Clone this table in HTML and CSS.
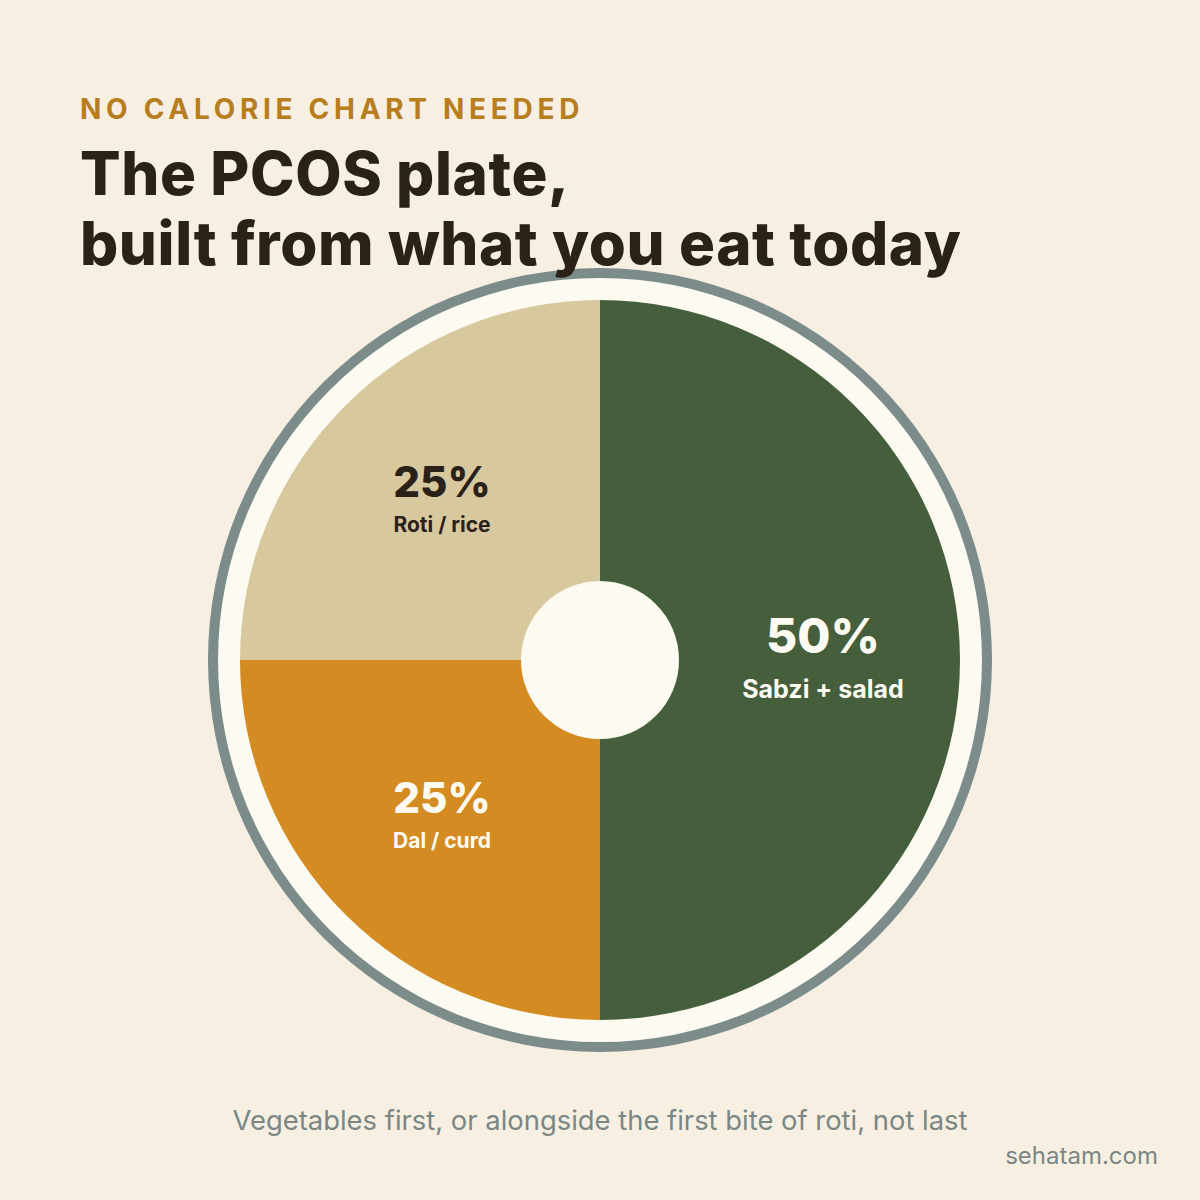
FILE: index.html
```html
<!DOCTYPE html>
<html lang="en">
<head>
<meta charset="utf-8">
<link rel="stylesheet" href="styles.css">
</head>
<body>
<main class="page">
  <header class="head">
    <p class="eyebrow">NO CALORIE CHART NEEDED</p>
    <h1 class="title">The PCOS plate,<br>built from what you eat today</h1>
  </header>
  <section class="plate">
    <div class="rim">
      <div class="pie">
        <div class="hole"></div>
        <div class="label label-roti"><span class="pct">25%</span><span class="name">Roti / rice</span></div>
        <div class="label label-dal"><span class="pct">25%</span><span class="name">Dal / curd</span></div>
        <div class="label label-sabzi"><span class="pct pct-big">50%</span><span class="name name-big">Sabzi + salad</span></div>
      </div>
    </div>
  </section>
  <p class="caption">Vegetables first, or alongside the first bite of roti, not last</p>
  <p class="site">sehatam.com</p>
</main>
</body>
</html>
```
FILE: styles.css
```css
* { box-sizing: border-box; }
html, body { margin: 0; padding: 0; }
body { background: #f7efe2; font-family: "Inter", "Noto Sans", sans-serif; }
.page {
  width: 1200px;
  height: 1200px;
  display: flex;
  flex-direction: column;
  padding-top: 94px;
}
.head { padding-left: 80px; position: relative; z-index: 2; }
.eyebrow {
  margin: 0;
  color: #b87d1c;
  font-size: 28px;
  line-height: 30px;
  font-weight: 700;
  letter-spacing: 4.7px;
}
.title {
  margin: 14px 0 0;
  color: #2a2118;
  font-size: 60px;
  line-height: 70px;
  font-weight: 800;
  letter-spacing: 0.6px;
}
.plate {
  align-self: center;
  margin-top: -10px;
  width: 784px;
  height: 784px;
  border-radius: 50%;
  background: #7b8c8b;
  padding: 10px;
  position: relative;
  z-index: 1;
}
.rim {
  width: 100%;
  height: 100%;
  border-radius: 50%;
  background: #fdfbf1;
  padding: 22px;
}
.pie {
  width: 100%;
  height: 100%;
  border-radius: 50%;
  background: conic-gradient(#455e3c 0deg 180deg, #d48c22 180deg 270deg, #d8c89e 270deg 360deg);
  position: relative;
  display: flex;
  align-items: center;
  justify-content: center;
}
.hole {
  width: 158px;
  height: 158px;
  border-radius: 50%;
  background: #fdfbf1;
}
.label {
  position: absolute;
  display: flex;
  flex-direction: column;
  align-items: center;
  transform: translate(-50%, -50%);
  white-space: nowrap;
}
.label-roti { left: 202px; top: 198px; color: #2a2118; }
.label-dal { left: 202px; top: 514px; color: #fdfbf1; }
.label-sabzi { left: 583px; top: 356px; color: #fdfbf1; }
.pct { font-size: 42px; line-height: 46px; font-weight: 800; }
.name { font-size: 21px; line-height: 24px; font-weight: 700; margin-top: 8px; }
.pct-big { font-size: 48px; line-height: 54px; }
.name-big { font-size: 25px; line-height: 28px; margin-top: 12px; }
.caption {
  margin: 52px 0 0;
  text-align: center;
  color: #7a8784;
  font-size: 27.4px;
  line-height: 32px;
  font-weight: 400;
}
.site {
  margin: 6px 42px 0 0;
  text-align: right;
  color: #7a8784;
  font-size: 24px;
  line-height: 28px;
}
```
